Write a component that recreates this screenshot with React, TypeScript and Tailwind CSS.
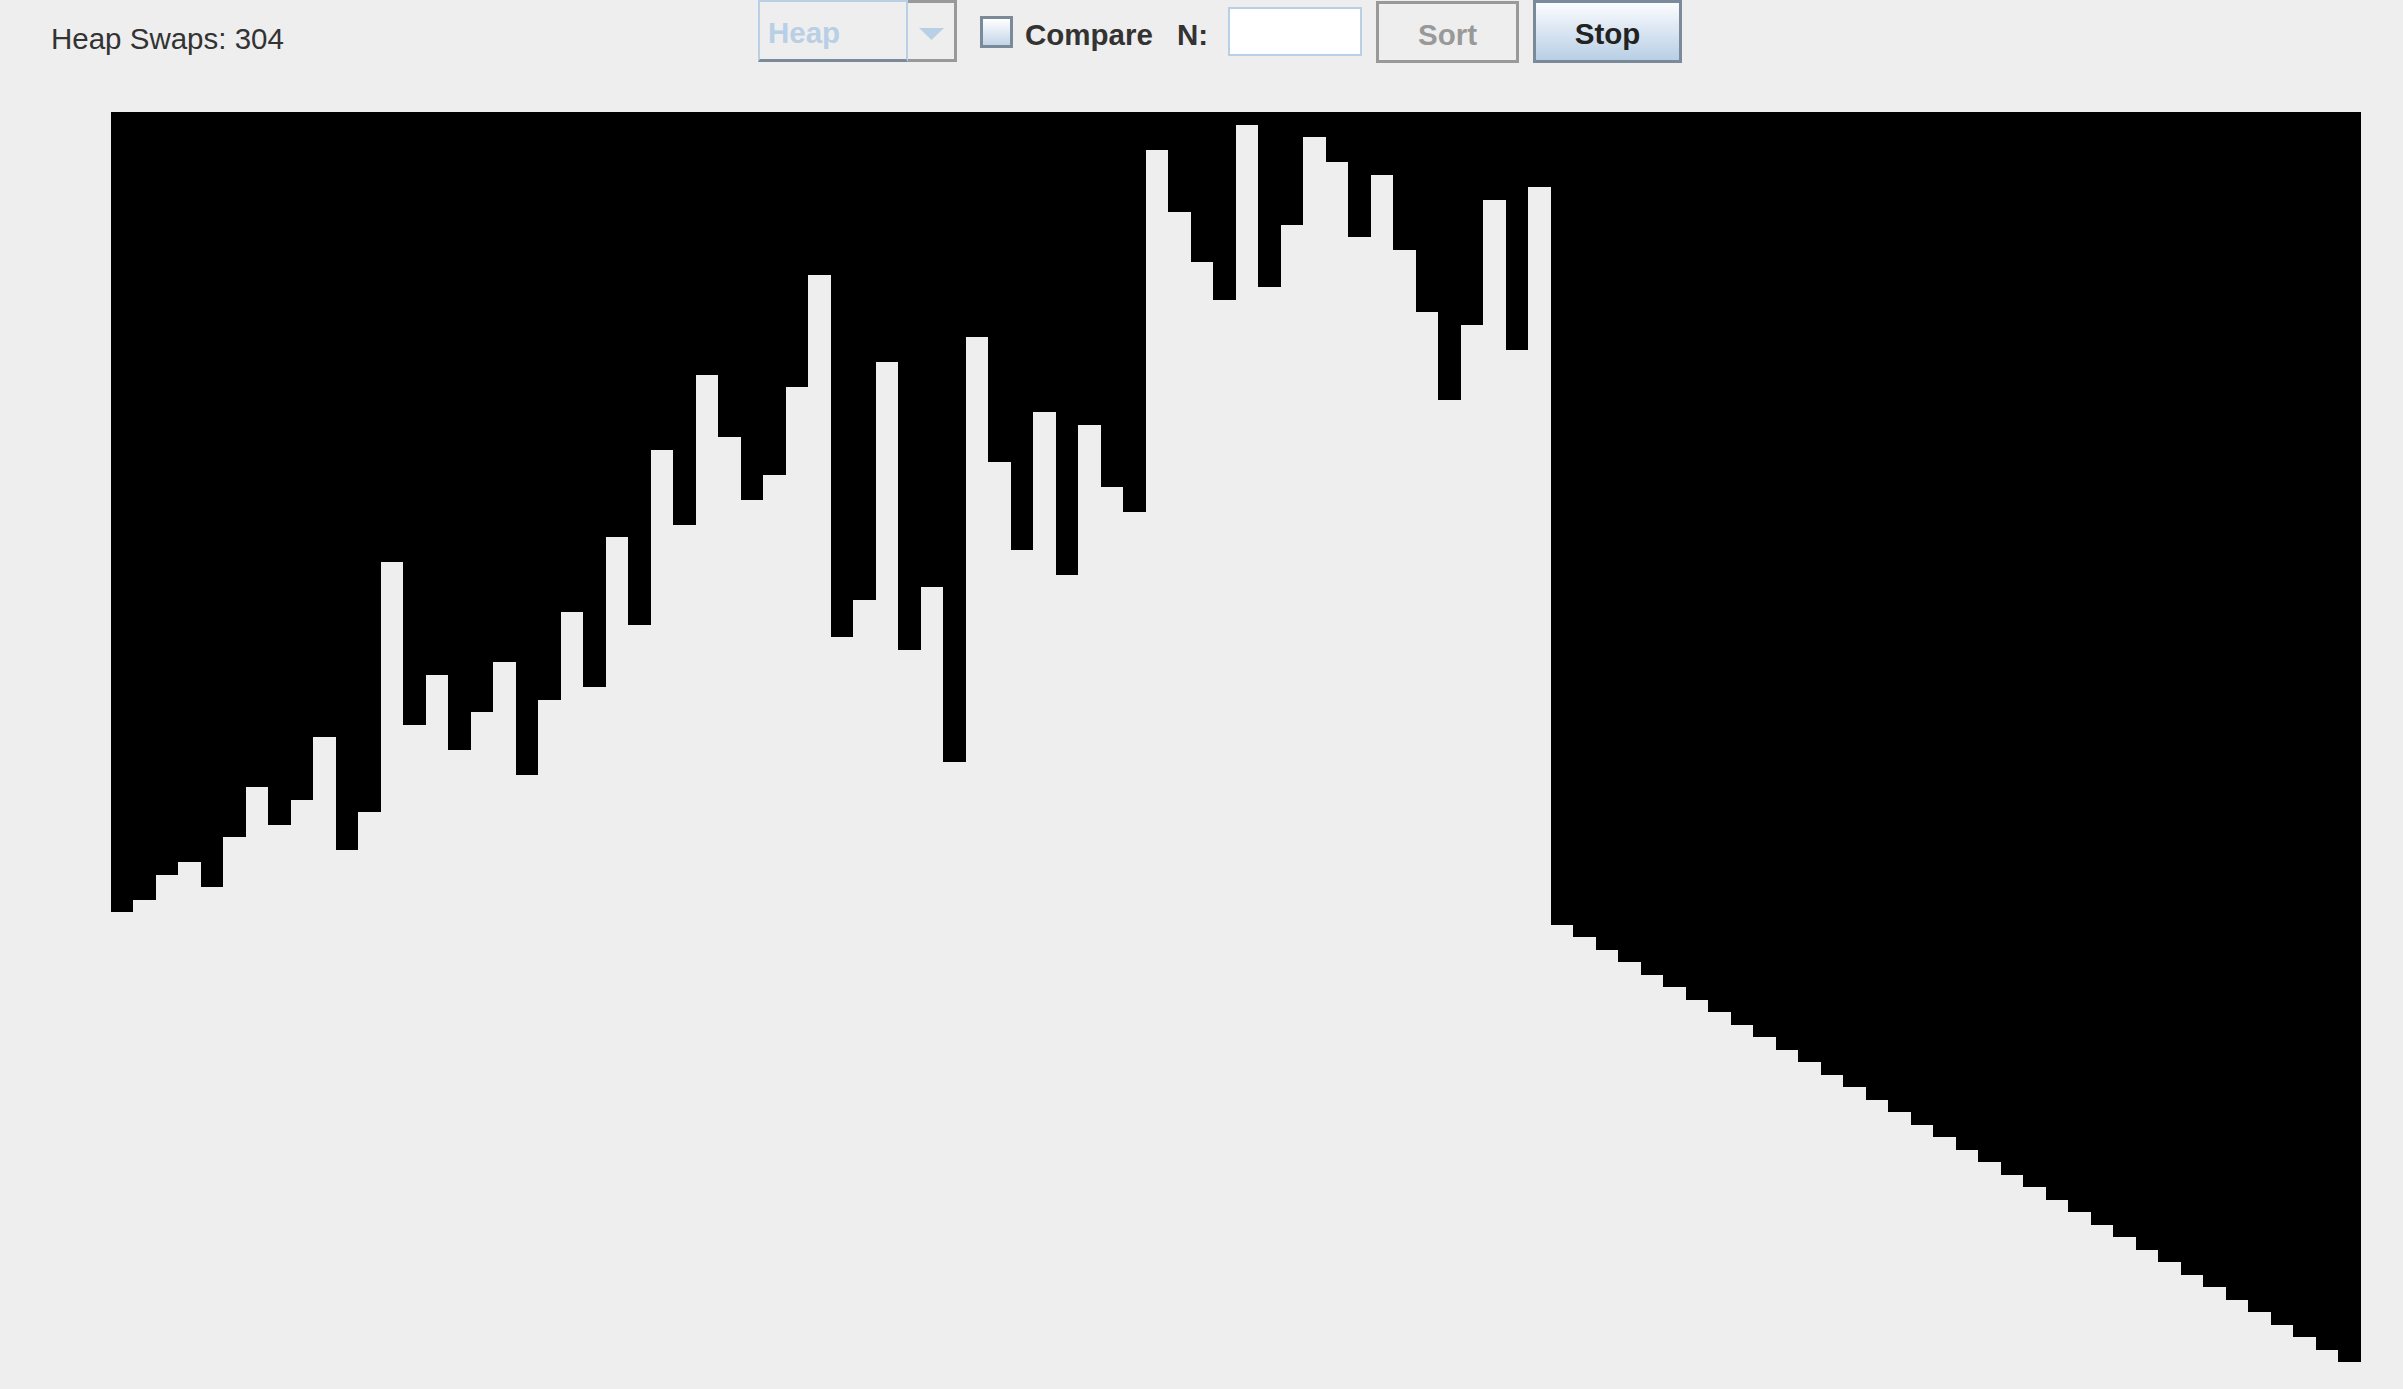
const heap = [
  64, 63, 61, 60, 62, 58, 54, 57, 55, 50, 59, 56, 36, 49, 45, 51, 48, 44, 53, 47, 40, 46, 34, 41, 27, 33, 21, 26, 31, 29, 22, 13,
  42, 39, 20, 43, 38, 52, 18, 28, 35, 24, 37, 25, 30, 32, 3, 8, 12, 15, 1, 14, 9, 2, 4, 10, 5, 11, 16, 23, 17, 7, 19, 6,
];
const values = [...heap, ...Array.from({ length: 36 }, (_, i) => 65 + i)];

function Controls() {
  return (
    <div className="flex items-start font-['Liberation_Sans',Arial,sans-serif] font-bold leading-none">
      <div className="flex h-[62px] w-[199px]">
        <div className="h-full w-[150px] border-2 border-b-[3px] border-[#b8cfe5] border-b-[#7a8a99] pl-[8px] pt-[16px] text-[29.5px] text-[#b8cfe5]">
          Heap
        </div>
        <div className="flex h-full w-[49px] items-start justify-center border-[3px] border-l-0 border-[#999999] pt-[25px]">
          <svg width="25" height="12" viewBox="0 0 25 12">
            <polygon points="0,0 25,0 12.5,12" fill="#b8cfe5" />
          </svg>
        </div>
      </div>
      <div className="ml-[23px] mt-[16px] h-[32px] w-[33px] border-[3px] border-[#7a8a99] bg-linear-to-b from-white to-[#c3d5e8]" />
      <span className="ml-[12px] mt-[20px] w-[128px] text-[29.5px] text-[#333333]">Compare</span>
      <span className="ml-[24px] mt-[20px] w-[30px] text-[29.5px] text-[#333333]">N:</span>
      <div className="ml-[21px] mt-[7px] h-[49px] w-[134px] border-2 border-[#b8cfe5] bg-white" />
      <button className="ml-[14px] mt-[1px] h-[62px] w-[143px] border-[3px] border-[#999999] bg-[#eeeeee] pt-[5px] text-[29.5px] text-[#999999]">
        Sort
      </button>
      <button className="ml-[14px] h-[63px] w-[149px] border-[3px] border-[#7a8a99] bg-linear-to-b from-[#fbfcfe] to-[#b8cfe5] pt-[5px] text-[29.5px] text-[#222222]">
        Stop
      </button>
    </div>
  );
}

export default function App() {
  return (
    <div className="flex h-screen flex-col overflow-hidden bg-[#eeeeee]">
      <div className="flex h-[112px] items-start">
        <div className="w-[758px] pl-[51px] pt-[24px] font-['Liberation_Sans',Arial,sans-serif] text-[29.5px] leading-none text-[#333333]">
          Heap Swaps: 304
        </div>
        <Controls />
      </div>
      <div className="flex items-start pl-[111px]">
        {values.map((v, i) => (
          <div
            key={i}
            className={i % 2 === 0 ? "w-[22px] shrink-0 bg-black" : "w-[23px] shrink-0 bg-black"}
            style={{ height: Math.round(v * 12.5) }}
          />
        ))}
      </div>
    </div>
  );
}
